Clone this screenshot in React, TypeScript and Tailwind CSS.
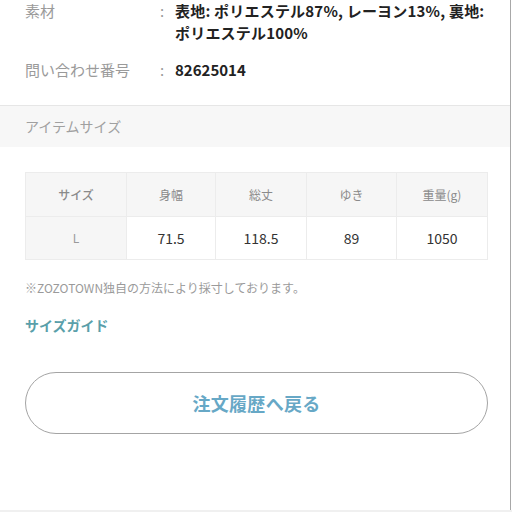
import React from "react";

const font = { fontFamily: '"Noto Sans CJK JP", "Noto Sans", sans-serif' };

export default function App() {
  return (
    <div className="relative w-[512px] h-[512px] overflow-hidden bg-white" style={font}>
      <div className="absolute right-[1px] top-0 h-full w-px bg-[#a8a8a8]" />
      <div className="absolute left-0 bottom-0 h-[2px] w-full bg-[#f0f0f0]" />
      <div className="w-[510px]">
        <div className="px-[25px]">
          <div className="flex text-[15px] leading-[22px]">
            <div className="w-[135px] shrink-0 text-[#9a9a9a]">素材</div>
            <div className="w-[15px] shrink-0 text-[#9a9a9a]">:</div>
            <div className="flex-1 font-bold text-[#222] tracking-[0.2px] whitespace-nowrap">
              表地: ポリエステル87%, レーヨン13%, 裏地:
              <br />
              ポリエステル100%
            </div>
          </div>
          <div className="flex text-[15px] leading-[22px] mt-[15px]">
            <div className="w-[135px] shrink-0 text-[#9a9a9a]">問い合わせ番号</div>
            <div className="w-[15px] shrink-0 text-[#9a9a9a]">:</div>
            <div className="flex-1 font-bold text-[#222]">82625014</div>
          </div>
        </div>
        <div className="mt-[24px] h-[42px] border-t border-[#e6e6e6] bg-[#f7f7f7] flex items-center px-[25px] text-[14px] text-[#a0a0a0]">
          アイテムサイズ
        </div>
        <div className="px-[25px] pt-[25px]">
          <table className="w-[463px] border-collapse border border-[#ececec] table-fixed">
            <thead>
              <tr className="h-[44px] bg-[#f6f6f6] text-[12px] text-[#8a8a8a]">
                <th className="w-[101px] font-medium border border-[#ececec]">サイズ</th>
                <th className="w-[89px] font-normal border border-[#ececec]">身幅</th>
                <th className="w-[91px] font-normal border border-[#ececec]">総丈</th>
                <th className="w-[90px] font-normal border border-[#ececec]">ゆき</th>
                <th className="font-normal border border-[#ececec]">重量(g)</th>
              </tr>
            </thead>
            <tbody>
              <tr className="h-[43px] text-[14px] text-[#333]">
                <td className="bg-[#f6f6f6] text-center text-[12px] text-[#9a9a9a] border border-[#ececec]">L</td>
                <td className="text-center border border-[#ececec]">71.5</td>
                <td className="text-center border border-[#ececec]">118.5</td>
                <td className="text-center border border-[#ececec]">89</td>
                <td className="text-center border border-[#ececec]">1050</td>
              </tr>
            </tbody>
          </table>
          <div className="mt-[19px] text-[12px] leading-[18px] text-[#9a9a9a]">
            ※ZOZOTOWN独自の方法により採寸しております。
          </div>
          <div className="mt-[19px] text-[14px] leading-[18px] font-bold text-[#5a9faa]">サイズガイド</div>
          <div className="mt-[38px] w-[463px] h-[62px] rounded-full border border-[#a4a4a4] flex items-center justify-center">
            <span className="text-[18px] font-bold text-[#67a8c6] tracking-[0.3px]">注文履歴へ戻る</span>
          </div>
        </div>
      </div>
    </div>
  );
}
